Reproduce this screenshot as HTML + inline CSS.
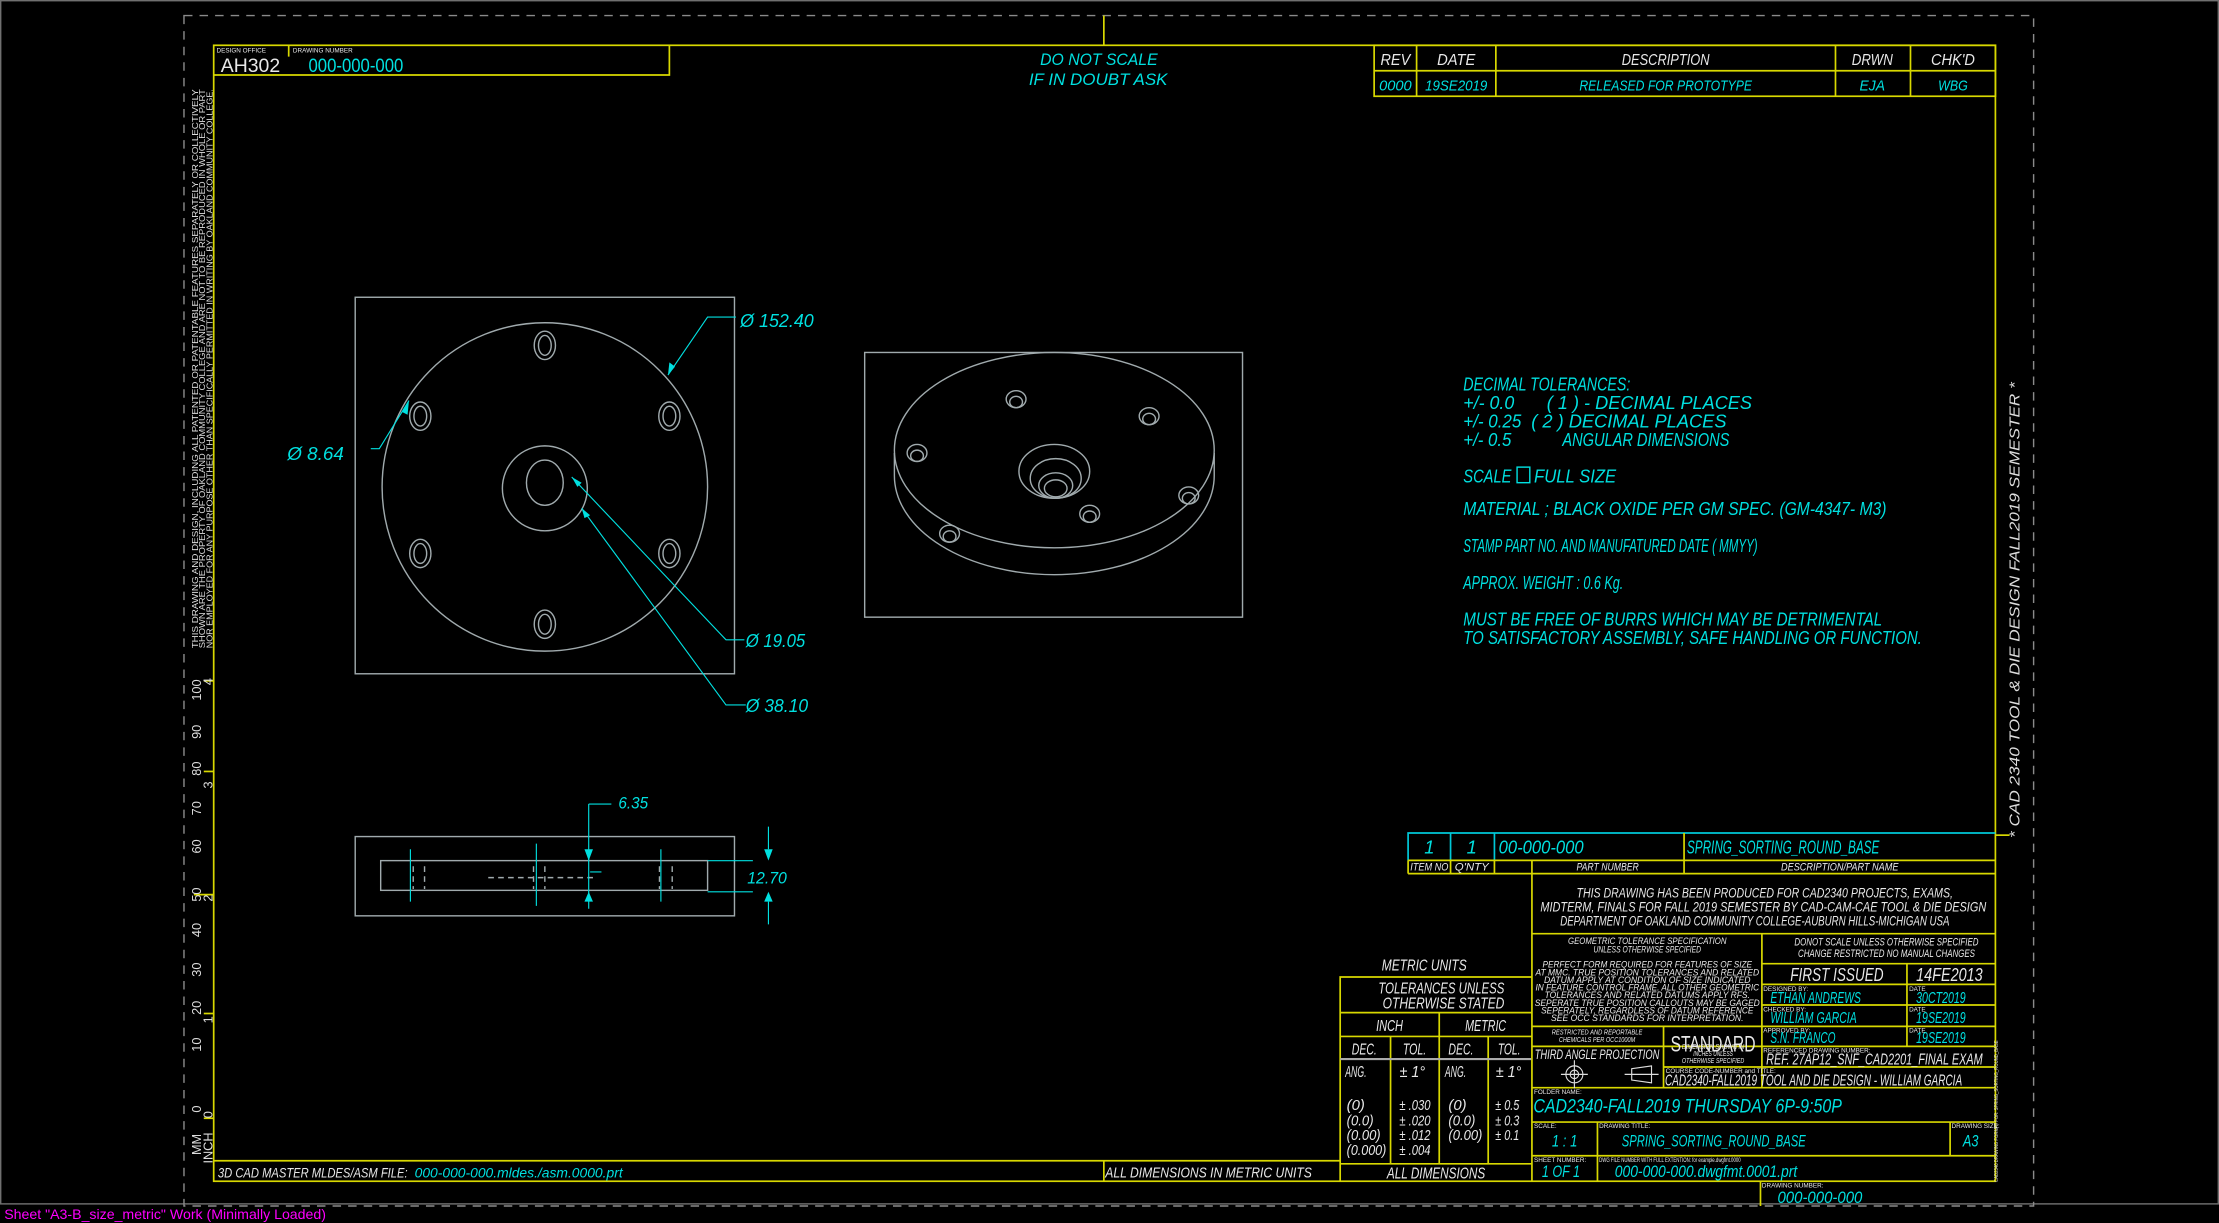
<!DOCTYPE html>
<html><head><meta charset="utf-8"><style>
html,body{margin:0;padding:0;background:#000;overflow:hidden}
svg{display:block}
text{font-family:"Liberation Sans",sans-serif;}
.c{fill:#00e0e0}.w{fill:#e8e8e8}.y{stroke:#d8d800;fill:none;stroke-width:1.2}
.g{stroke:#a0aaad;fill:none;stroke-width:1}
.cl{stroke:#00e0e0;fill:none;stroke-width:0.8}
</style></head><body>
<svg width="2219" height="1223" viewBox="0 0 1568 864" preserveAspectRatio="none" xmlns="http://www.w3.org/2000/svg">
<rect x="0" y="0" width="1568" height="864" fill="#000"/>
<rect x="0.5" y="0.5" width="1567" height="850" fill="none" stroke="#707070" stroke-width="1"/>
<text x="3" y="861" font-size="10" fill="#ff00ff">Sheet "A3-B_size_metric" Work (Minimally Loaded)</text>
<rect x="130" y="11" width="1307" height="841" fill="none" stroke="#8a8a8a" stroke-dasharray="6,5"/>
<rect x="151" y="32" width="1259" height="802.5" class="y"/>
<line x1="780" y1="11" x2="780" y2="32" class="y"/>
<line x1="1410" y1="590" x2="1420" y2="590" class="y"/>
<g class="y"><line x1="144" y1="481" x2="151" y2="481"/><line x1="144" y1="545" x2="151" y2="545"/><line x1="137" y1="632" x2="151" y2="632"/><line x1="144" y1="716" x2="151" y2="716"/><line x1="144" y1="790" x2="151" y2="790"/></g>
<g font-size="9" fill="#ddd">
<text transform="translate(142,495) rotate(-90)">100</text><text transform="translate(142,522) rotate(-90)">90</text><text transform="translate(142,548) rotate(-90)">80</text><text transform="translate(142,576) rotate(-90)">70</text><text transform="translate(142,603) rotate(-90)">60</text><text transform="translate(142,637) rotate(-90)">50</text><text transform="translate(142,662) rotate(-90)">40</text><text transform="translate(142,690) rotate(-90)">30</text><text transform="translate(142,717) rotate(-90)">20</text><text transform="translate(142,743) rotate(-90)">10</text><text transform="translate(142,786) rotate(-90)">0</text>
<text transform="translate(150,484) rotate(-90)">4</text><text transform="translate(150,557) rotate(-90)">3</text><text transform="translate(150,637) rotate(-90)">2</text><text transform="translate(150,723) rotate(-90)">1</text><text transform="translate(150,790) rotate(-90)">0</text>
<text transform="translate(142,816) rotate(-90)">MM</text><text transform="translate(150,822) rotate(-90)">INCH</text>
</g>
<g font-size="6" fill="#ddd">
<text transform="translate(140,458) rotate(-90)" textLength="395" lengthAdjust="spacingAndGlyphs">THIS DRAWING AND DESIGN, INCLUDING ALL PATENTED OR PATENTABLE FEATURES SEPARATELY OR COLLECTIVELY</text>
<text transform="translate(145,458) rotate(-90)" textLength="395" lengthAdjust="spacingAndGlyphs">SHOWN ARE THE PROPERTY OF OAKLAND COMMUNITY COLLEGE AND ARE NOT TO BE REPRODUCED IN WHOLE OR PART</text>
<text transform="translate(150,458) rotate(-90)" textLength="395" lengthAdjust="spacingAndGlyphs">NOR EMPLOYED FOR ANY PURPOSE OTHER THAN SPECIFICALLY PERMITTED IN WRITING BY OAKLAND COMMUNITY COLLEGE.</text>
</g>
<text transform="translate(1427,592) rotate(-90)" font-size="10.5" fill="#ddd" font-style="italic" textLength="322" lengthAdjust="spacingAndGlyphs">* CAD 2340 TOOL &amp; DIE DESIGN FALL2019 SEMESTER *</text>
<path d="M151 53 H473 V32" class="y"/>
<line x1="204" y1="32" x2="204" y2="40" class="y"/>
<text x="153" y="37" font-size="4.5" class="w">DESIGN OFFICE</text>
<text x="207" y="37" font-size="4.5" class="w">DRAWING NUMBER</text>
<text x="156" y="51" font-size="14" class="w" textLength="42" lengthAdjust="spacingAndGlyphs">AH302</text>
<text x="218" y="51" font-size="14" class="c" textLength="67" lengthAdjust="spacingAndGlyphs">000-000-000</text>
<text x="735" y="46" font-size="12" class="c" font-style="italic" textLength="83" lengthAdjust="spacingAndGlyphs">DO NOT SCALE</text>
<text x="727" y="60" font-size="12" class="c" font-style="italic" textLength="98" lengthAdjust="spacingAndGlyphs">IF IN DOUBT ASK</text>
<g class="y"><rect x="971" y="32" width="439" height="36"/><line x1="971" y1="50" x2="1410" y2="50"/>
<line x1="1001" y1="32" x2="1001" y2="68"/><line x1="1057" y1="32" x2="1057" y2="68"/><line x1="1297" y1="32" x2="1297" y2="68"/><line x1="1350" y1="32" x2="1350" y2="68"/></g>
<g font-size="11" text-anchor="middle" class="w" font-style="italic"><text x="986" y="46" textLength="21" lengthAdjust="spacingAndGlyphs">REV</text><text x="1029" y="46" textLength="27" lengthAdjust="spacingAndGlyphs">DATE</text><text x="1177" y="46" textLength="62" lengthAdjust="spacingAndGlyphs">DESCRIPTION</text><text x="1323" y="46" textLength="29" lengthAdjust="spacingAndGlyphs">DRWN</text><text x="1380" y="46" textLength="31" lengthAdjust="spacingAndGlyphs">CHK'D</text></g>
<g font-size="10.5" text-anchor="middle" class="c" font-style="italic"><text x="986" y="64" textLength="23" lengthAdjust="spacingAndGlyphs">0000</text><text x="1029" y="64" textLength="44" lengthAdjust="spacingAndGlyphs">19SE2019</text><text x="1177" y="64" textLength="122" lengthAdjust="spacingAndGlyphs">RELEASED FOR PROTOTYPE</text><text x="1323" y="64" textLength="18" lengthAdjust="spacingAndGlyphs">EJA</text><text x="1380" y="64" textLength="21" lengthAdjust="spacingAndGlyphs">WBG</text></g>
<rect x="251" y="210" width="268" height="266" class="g"/>
<ellipse cx="385" cy="344" rx="115" ry="116" class="g" stroke-width="1.3"/>
<circle cx="385" cy="345" r="30" class="g" stroke-width="1.3"/>
<ellipse cx="385" cy="341" rx="13" ry="16" class="g" stroke-width="1.3"/>
<g class="g" stroke-width="1.3">
<ellipse cx="385" cy="244" rx="7.5" ry="10"/><ellipse cx="385" cy="244" rx="4.5" ry="7"/>
<ellipse cx="297" cy="294" rx="7.5" ry="10"/><ellipse cx="297" cy="294" rx="4.5" ry="7"/>
<ellipse cx="473" cy="294" rx="7.5" ry="10"/><ellipse cx="473" cy="294" rx="4.5" ry="7"/>
<ellipse cx="297" cy="391" rx="7.5" ry="10"/><ellipse cx="297" cy="391" rx="4.5" ry="7"/>
<ellipse cx="473" cy="391" rx="7.5" ry="10"/><ellipse cx="473" cy="391" rx="4.5" ry="7"/>
<ellipse cx="385" cy="441" rx="7.5" ry="10"/><ellipse cx="385" cy="441" rx="4.5" ry="7"/>
</g>
<g class="cl">
<path d="M520 224 H500 L472 265"/><path d="M262 317 H268 L289 283"/><path d="M526 452 H513 L404 337"/><path d="M527 498 H513 L411 359"/>
</g>
<g fill="#00e0e0"><path d="M472 265 L473 256 L477 259Z"/><path d="M289 283 L284 291 L288 293Z"/><path d="M404 337 L411 341 L408 344Z"/><path d="M411 359 L417 364 L413 366Z"/></g>
<g font-size="13" class="c" font-style="italic"><text x="523" y="231" textLength="52" lengthAdjust="spacingAndGlyphs">Ø 152.40</text><text x="203" y="325" textLength="40" lengthAdjust="spacingAndGlyphs">Ø 8.64</text><text x="527" y="457" textLength="42" lengthAdjust="spacingAndGlyphs">Ø 19.05</text><text x="527" y="503" textLength="44" lengthAdjust="spacingAndGlyphs">Ø 38.10</text></g>
<rect x="611" y="249" width="267" height="187" class="g"/>
<g class="g" stroke-width="1.3">
<ellipse cx="745" cy="318" rx="113" ry="69"/>
<path d="M632 320 V336 A113 70 0 0 0 858 336 V320"/>
<ellipse cx="745" cy="333" rx="25" ry="19"/><ellipse cx="746" cy="338" rx="18" ry="14"/><ellipse cx="746" cy="343" rx="12" ry="9"/><ellipse cx="746" cy="345" rx="8" ry="6"/>
<ellipse cx="718" cy="282" rx="7" ry="6"/><ellipse cx="718" cy="284" rx="4.5" ry="4"/>
<ellipse cx="812" cy="294" rx="7" ry="6"/><ellipse cx="812" cy="296" rx="4.5" ry="4"/>
<ellipse cx="648" cy="320" rx="7" ry="6"/><ellipse cx="648" cy="322" rx="4.5" ry="4"/>
<ellipse cx="840" cy="350" rx="7" ry="6"/><ellipse cx="840" cy="352" rx="4.5" ry="4"/>
<ellipse cx="671" cy="377" rx="7" ry="6"/><ellipse cx="671" cy="379" rx="4.5" ry="4"/>
<ellipse cx="770" cy="363" rx="7" ry="6"/><ellipse cx="770" cy="365" rx="4.5" ry="4"/>
</g>
<rect x="251" y="591" width="268" height="56" class="g"/>
<rect x="269" y="608" width="231" height="21" class="g" stroke-width="1.6"/>
<g class="g" stroke-dasharray="4,3"><path d="M292 612 V628 M300 612 V628 M466 612 V628 M475 612 V628 M377 612 V628 M385 612 V628 M345 620 H420"/></g>
<g class="cl"><path d="M290 600 V637 M467 600 V637 M379 596 V640 M416 568 H432 M416 568 V642 M417 616 H425 M500 608 H532 M500 630 H532 M543 584 V600 M543 637 V653"/></g>
<g fill="#00e0e0"><path d="M413 600 L419 600 L416 608Z"/><path d="M413 637 L419 637 L416 630Z"/><path d="M540 600 L546 600 L543 608Z"/><path d="M540 637 L546 637 L543 630Z"/></g>
<g font-size="12" class="c" font-style="italic"><text x="437" y="571" textLength="21" lengthAdjust="spacingAndGlyphs">6.35</text><text x="528" y="624" textLength="28" lengthAdjust="spacingAndGlyphs">12.70</text></g>
<g font-size="13" class="c" font-style="italic">
<text x="1034" y="276" textLength="118" lengthAdjust="spacingAndGlyphs">DECIMAL TOLERANCES:</text>
<text x="1034" y="289" textLength="36" lengthAdjust="spacingAndGlyphs">+/- 0.0</text><text x="1093" y="289" textLength="145" lengthAdjust="spacingAndGlyphs">( 1 ) - DECIMAL PLACES</text>
<text x="1034" y="302" textLength="41" lengthAdjust="spacingAndGlyphs">+/- 0.25</text><text x="1082" y="302" textLength="138" lengthAdjust="spacingAndGlyphs">( 2 ) DECIMAL PLACES</text>
<text x="1034" y="315" textLength="34" lengthAdjust="spacingAndGlyphs">+/- 0.5</text><text x="1104" y="315" textLength="118" lengthAdjust="spacingAndGlyphs">ANGULAR DIMENSIONS</text>
<text x="1034" y="341" textLength="34" lengthAdjust="spacingAndGlyphs">SCALE</text>
<text x="1084" y="341" textLength="58" lengthAdjust="spacingAndGlyphs">FULL SIZE</text>
<text x="1034" y="364" textLength="299" lengthAdjust="spacingAndGlyphs">MATERIAL ;  BLACK OXIDE PER GM SPEC. (GM-4347- M3)</text>
<text x="1034" y="390" textLength="208" lengthAdjust="spacingAndGlyphs">STAMP PART NO. AND MANUFATURED DATE ( MMYY)</text>
<text x="1034" y="416" textLength="113" lengthAdjust="spacingAndGlyphs">APPROX. WEIGHT : 0.6 Kg.</text>
<text x="1034" y="442" textLength="296" lengthAdjust="spacingAndGlyphs">MUST BE FREE OF BURRS WHICH MAY BE DETRIMENTAL</text>
<text x="1034" y="455" textLength="324" lengthAdjust="spacingAndGlyphs">TO SATISFACTORY ASSEMBLY, SAFE HANDLING OR FUNCTION.</text>
</g>
<rect x="1072" y="330" width="9" height="11" fill="none" stroke="#00e0e0"/>
<line x1="151" y1="820" x2="947" y2="820" class="y"/>
<line x1="780" y1="820" x2="780" y2="834.5" class="y"/>
<text x="154" y="832" font-size="10" class="w" font-style="italic" textLength="134" lengthAdjust="spacingAndGlyphs">3D CAD MASTER MLDES/ASM FILE:</text>
<text x="293" y="832" font-size="10" class="c" font-style="italic" textLength="147" lengthAdjust="spacingAndGlyphs">000-000-000.mldes./asm.0000.prt</text>
<text x="781" y="832" font-size="10.5" class="w" font-style="italic" textLength="146" lengthAdjust="spacingAndGlyphs">ALL DIMENSIONS IN METRIC UNITS</text>
<g stroke="#00c8d8" fill="none" stroke-width="1.2"><path d="M995 607.8 V588.5 H1410"/><line x1="1025" y1="588.5" x2="1025" y2="607.8"/><line x1="1056" y1="588.5" x2="1056" y2="607.8"/></g>
<g class="y"><path d="M995 607.8 H1410 M995 617.2 H1410 M995 607.8 V617.2 M1025 607.8 V617.2 M1056 607.8 V617.2 M1082.5 607.8 V834.5 M1190 588.5 V617.2"/></g>
<g font-size="13" class="c" font-style="italic"><text x="1010" y="603" text-anchor="middle">1</text><text x="1040" y="603" text-anchor="middle">1</text><text x="1059" y="603" textLength="60" lengthAdjust="spacingAndGlyphs">00-000-000</text><text x="1192" y="603" textLength="136" lengthAdjust="spacingAndGlyphs">SPRING_SORTING_ROUND_BASE</text></g>
<g font-size="7.5" class="w" font-style="italic"><text x="996.5" y="615" textLength="27" lengthAdjust="spacingAndGlyphs">ITEM NO</text><text x="1028" y="615" textLength="24" lengthAdjust="spacingAndGlyphs">Q'NTY</text><text x="1136" y="615" text-anchor="middle" textLength="44" lengthAdjust="spacingAndGlyphs">PART NUMBER</text><text x="1300" y="615" text-anchor="middle" textLength="83" lengthAdjust="spacingAndGlyphs">DESCRIPTION/PART NAME</text></g>
<g font-size="9.5" class="w" text-anchor="middle" font-style="italic"><text x="1247" y="634" textLength="266" lengthAdjust="spacingAndGlyphs">THIS DRAWING HAS BEEN PRODUCED FOR CAD2340 PROJECTS, EXAMS,</text><text x="1246" y="644" textLength="315" lengthAdjust="spacingAndGlyphs">MIDTERM, FINALS FOR FALL 2019 SEMESTER BY CAD-CAM-CAE TOOL &amp; DIE DESIGN</text><text x="1240" y="654" textLength="275" lengthAdjust="spacingAndGlyphs">DEPARTMENT OF OAKLAND COMMUNITY COLLEGE-AUBURN HILLS-MICHIGAN USA</text></g>
<g class="y">
<path d="M1082.5 659.6 H1410 M1245 659.6 V768.4 M1245 680.8 H1410 M1245 695.4 H1410 M1245 710 H1410 M1082.5 725.1 H1410 M1082.5 739.2 H1410 M1347.5 680.8 V739.2 M1175.5 725.1 V768.4 M1175.5 753.8 H1410 M1082.5 768.4 H1410 M1082.5 792.7 H1410 M1082.5 816.5 H1410 M1128.8 792.7 V834.5 M1378 792.7 V816.5 M1244 834.5 V852"/>
<path d="M947 834.5 V690.2 H1082.5 M947 715.4 H1082.5 M947 732.2 H1082.5 M1017 715.4 V822.2 M982.6 732.2 V822.2 M1051.6 732.2 V822.2 M947 822.2 H1082.5"/>
</g>
<line x1="947" y1="748.2" x2="1082" y2="748.2" stroke="#aaa" stroke-width="1.5"/>
<g font-size="6.5" class="w" text-anchor="middle" font-style="italic">
<text x="1164" y="667" textLength="112" lengthAdjust="spacingAndGlyphs">GEOMETRIC TOLERANCE SPECIFICATION</text><text x="1164" y="673" textLength="76" lengthAdjust="spacingAndGlyphs">UNLESS OTHERWISE SPECIFIED</text>
<text x="1164" y="683.5" textLength="148" lengthAdjust="spacingAndGlyphs">PERFECT FORM REQUIRED FOR FEATURES OF SIZE</text><text x="1164" y="689" textLength="158" lengthAdjust="spacingAndGlyphs">AT MMC. TRUE POSITION TOLERANCES AND RELATED</text><text x="1164" y="694.4" textLength="146" lengthAdjust="spacingAndGlyphs">DATUM APPLY AT CONDITION OF SIZE INDICATED</text><text x="1164" y="699.8" textLength="158" lengthAdjust="spacingAndGlyphs">IN FEATURE CONTROL FRAME. ALL OTHER GEOMETRIC</text><text x="1164" y="705.2" textLength="145" lengthAdjust="spacingAndGlyphs">TOLERANCES AND RELATED DATUMS APPLY RFS.</text><text x="1164" y="710.6" textLength="159" lengthAdjust="spacingAndGlyphs">SEPERATE TRUE POSITION CALLOUTS MAY BE GAGED</text><text x="1164" y="716" textLength="150" lengthAdjust="spacingAndGlyphs">SEPERATELY, REGARDLESS OF DATUM REFERENCE</text><text x="1164" y="721.4" textLength="136" lengthAdjust="spacingAndGlyphs">SEE OCC STANDARDS FOR INTERPRETATION.</text>
<text x="1333" y="668" font-size="7.5" textLength="130" lengthAdjust="spacingAndGlyphs">DONOT SCALE UNLESS OTHERWISE SPECIFIED</text><text x="1333" y="676" font-size="7.5" textLength="125" lengthAdjust="spacingAndGlyphs">CHANGE RESTRICTED NO MANUAL CHANGES</text>
<text x="1128.5" y="731" font-size="5.5" textLength="64" lengthAdjust="spacingAndGlyphs">RESTRICTED AND REPORTABLE</text><text x="1128.5" y="736" font-size="5.5" textLength="54" lengthAdjust="spacingAndGlyphs">CHEMICALS PER OCC1000M</text>
<text x="1210.5" y="741" font-size="5" textLength="44" lengthAdjust="spacingAndGlyphs">DIMENSION SHOWN IN</text><text x="1210.5" y="746" font-size="5" textLength="28" lengthAdjust="spacingAndGlyphs">INCHES UNLESS</text><text x="1210.5" y="751" font-size="5" textLength="44" lengthAdjust="spacingAndGlyphs">OTHERWISE SPECIFIED</text>
</g>
<text x="1180.5" y="743" font-size="16" class="w" textLength="60" lengthAdjust="spacingAndGlyphs">STANDARD</text>
<text x="1084.5" y="748" font-size="10" class="w" font-style="italic" textLength="88" lengthAdjust="spacingAndGlyphs">THIRD ANGLE PROJECTION</text>
<g stroke="#ddd" fill="none" stroke-width="0.8"><circle cx="1112.5" cy="759" r="6"/><circle cx="1112.5" cy="759" r="3"/><path d="M1103 759 H1122 M1112.5 749 V769 M1153 755 L1167 753 V765 L1153 763Z M1148 759 H1172"/></g>
<text x="1265" y="693" font-size="13" class="w" font-style="italic" textLength="66" lengthAdjust="spacingAndGlyphs">FIRST ISSUED</text><text x="1354" y="693" font-size="13" class="w" font-style="italic" textLength="47" lengthAdjust="spacingAndGlyphs">14FE2013</text>
<g font-size="4.5" class="w"><text x="1246" y="700">DESIGNED BY:</text><text x="1349" y="700">DATE</text><text x="1246" y="714.5">CHECKED BY:</text><text x="1349" y="714.5">DATE</text><text x="1246" y="729.5">APPROVED BY:</text><text x="1349" y="729.5">DATE</text><text x="1246" y="743.5">REFERENCED DRAWING NUMBER:</text><text x="1177" y="758">COURSE CODE-NUMBER and TITLE:</text><text x="1084" y="773">FOLDER NAME:</text><text x="1084" y="797">SCALE:</text><text x="1130" y="797">DRAWING TITLE:</text><text x="1379" y="797">DRAWING SIZE:</text><text x="1084" y="821">SHEET NUMBER:</text><text x="1130" y="821" textLength="100" lengthAdjust="spacingAndGlyphs">DWG FILE NUMBER WITH FULL EXTENTION: for example.dwgfmt.0000</text><text x="1245" y="839">DRAWING NUMBER:</text></g>
<g font-size="11" class="c" font-style="italic"><text x="1251" y="708.6" textLength="64" lengthAdjust="spacingAndGlyphs">ETHAN ANDREWS</text><text x="1354" y="708.6" textLength="35" lengthAdjust="spacingAndGlyphs">30CT2019</text><text x="1251" y="722.7" textLength="61" lengthAdjust="spacingAndGlyphs">WILLIAM GARCIA</text><text x="1354" y="722.7" textLength="35" lengthAdjust="spacingAndGlyphs">19SE2019</text><text x="1251" y="737" textLength="46" lengthAdjust="spacingAndGlyphs">S.N. FRANCO</text><text x="1354" y="737" textLength="35" lengthAdjust="spacingAndGlyphs">19SE2019</text></g>
<text x="1248" y="752" font-size="11" class="w" font-style="italic" textLength="153" lengthAdjust="spacingAndGlyphs">REF. 27AP12_SNF_CAD2201_FINAL EXAM</text>
<text x="1176.5" y="767" font-size="11" class="w" font-style="italic" textLength="210" lengthAdjust="spacingAndGlyphs">CAD2340-FALL2019 TOOL AND DIE DESIGN - WILLIAM GARCIA</text>
<text x="1083.5" y="786" font-size="14" class="c" font-style="italic" textLength="218" lengthAdjust="spacingAndGlyphs">CAD2340-FALL2019 THURSDAY 6P-9:50P</text>
<g font-size="11.5" class="c" font-style="italic"><text x="1096.6" y="810" textLength="18" lengthAdjust="spacingAndGlyphs">1 : 1</text><text x="1146" y="810" textLength="130" lengthAdjust="spacingAndGlyphs">SPRING_SORTING_ROUND_BASE</text><text x="1387" y="810" textLength="11" lengthAdjust="spacingAndGlyphs">A3</text><text x="1089.5" y="831.6" textLength="27" lengthAdjust="spacingAndGlyphs">1 OF 1</text><text x="1141" y="831.6" textLength="129" lengthAdjust="spacingAndGlyphs">000-000-000.dwgfmt.0001.prt</text><text x="1256" y="850" textLength="60" lengthAdjust="spacingAndGlyphs">000-000-000</text></g>
<g font-size="11" class="w" font-style="italic">
<text x="976.4" y="685.5" textLength="60" lengthAdjust="spacingAndGlyphs">METRIC UNITS</text><text x="974" y="702" textLength="89" lengthAdjust="spacingAndGlyphs">TOLERANCES UNLESS</text><text x="977" y="712.6" textLength="86" lengthAdjust="spacingAndGlyphs">OTHERWISE STATED</text>
<text x="972.4" y="728.4" textLength="19" lengthAdjust="spacingAndGlyphs">INCH</text><text x="1035.3" y="728.4" textLength="29" lengthAdjust="spacingAndGlyphs">METRIC</text>
<text x="955.2" y="745" textLength="17.7" lengthAdjust="spacingAndGlyphs">DEC.</text><text x="991.3" y="745" textLength="16.5" lengthAdjust="spacingAndGlyphs">TOL.</text><text x="1023.5" y="745" textLength="17.7" lengthAdjust="spacingAndGlyphs">DEC.</text><text x="1058.4" y="745" textLength="16" lengthAdjust="spacingAndGlyphs">TOL.</text>
<text x="950.6" y="761" textLength="15" lengthAdjust="spacingAndGlyphs">ANG.</text><text x="989" y="761" textLength="18" lengthAdjust="spacingAndGlyphs">± 1°</text><text x="1021" y="761" textLength="15" lengthAdjust="spacingAndGlyphs">ANG.</text><text x="1057" y="761" textLength="18" lengthAdjust="spacingAndGlyphs">± 1°</text>
<text x="980" y="832.7" textLength="69.5" lengthAdjust="spacingAndGlyphs">ALL DIMENSIONS</text>
</g>
<g font-size="10.5" class="w" font-style="italic">
<text x="951.6" y="784">(0)</text><text x="951.6" y="795" textLength="19" lengthAdjust="spacingAndGlyphs">(0.0)</text><text x="951.6" y="805.5" textLength="24" lengthAdjust="spacingAndGlyphs">(0.00)</text><text x="951.6" y="816" textLength="28" lengthAdjust="spacingAndGlyphs">(0.000)</text>
<text x="988.8" y="784" textLength="22" lengthAdjust="spacingAndGlyphs">± .030</text><text x="988.8" y="795" textLength="22" lengthAdjust="spacingAndGlyphs">± .020</text><text x="988.8" y="805.5" textLength="22" lengthAdjust="spacingAndGlyphs">± .012</text><text x="988.8" y="816" textLength="22" lengthAdjust="spacingAndGlyphs">± .004</text>
<text x="1023.5" y="784">(0)</text><text x="1023.5" y="795" textLength="19" lengthAdjust="spacingAndGlyphs">(0.0)</text><text x="1023.5" y="805.5" textLength="24" lengthAdjust="spacingAndGlyphs">(0.00)</text>
<text x="1056.6" y="784" textLength="17" lengthAdjust="spacingAndGlyphs">± 0.5</text><text x="1056.6" y="795" textLength="17" lengthAdjust="spacingAndGlyphs">± 0.3</text><text x="1056.6" y="805.5" textLength="17" lengthAdjust="spacingAndGlyphs">± 0.1</text>
</g>
<text transform="translate(1412,835) rotate(-90)" font-size="4" fill="#ddd" textLength="100" lengthAdjust="spacingAndGlyphs">CAD2340 DRAWING FORMAT FOR: SPRING_SORTING_ROUND_BASE</text>
</svg>
</body></html>
